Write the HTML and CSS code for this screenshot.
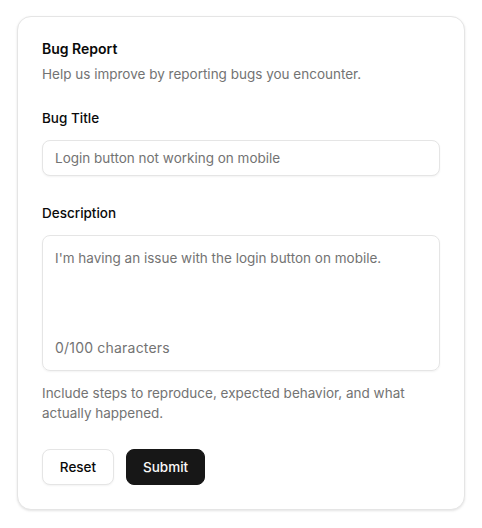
FILE: index.html
```html
<!DOCTYPE html>
<html lang="en">
<head>
<meta charset="utf-8">
<title>Bug Report</title>
<link rel="stylesheet" href="styles.css">
</head>
<body>
<div class="card">
  <div class="card-header">
    <h2 class="card-title">Bug Report</h2>
    <p class="card-desc">Help us improve by reporting bugs you encounter.</p>
  </div>
  <div class="field field-title">
    <label class="label" for="title">Bug Title</label>
    <input class="input" id="title" type="text" placeholder="Login button not working on mobile">
  </div>
  <div class="field field-desc">
    <label class="label" for="desc">Description</label>
    <div class="textarea">
      <div class="textarea-text">I'm having an issue with the login button on mobile.</div>
      <div class="counter">0/100 characters</div>
    </div>
    <p class="hint">Include steps to reproduce, expected behavior, and what actually happened.</p>
  </div>
  <div class="actions">
    <button class="btn btn-outline" type="button">Reset</button>
    <button class="btn btn-primary" type="button">Submit</button>
  </div>
</div>
</body>
</html>
```
FILE: styles.css
```css
* { box-sizing: border-box; }
html, body { margin: 0; padding: 0; background: #ffffff; }
body {
  padding: 16px 17px;
  font-family: Inter, "Noto Sans", "Liberation Sans", sans-serif;
  color: #0a0a0a;
}
.card {
  width: 448px;
  border: 1px solid #e5e5e5;
  border-radius: 14px;
  background: #fff;
  box-shadow: 0 1px 3px rgba(0,0,0,0.08), 0 1px 2px rgba(0,0,0,0.04);
  padding: 24px;
  display: flex;
  flex-direction: column;
}
.card-header { display: flex; flex-direction: column; gap: 7px; }
.card-title {
  margin: 0;
  font-size: 14px;
  line-height: 16px;
  font-weight: 600;
}
.card-desc {
  margin: 0;
  font-size: 13.5px;
  line-height: 20px;
  color: #737373;
}
.field { display: flex; flex-direction: column; }
.field-title { margin-top: 26px; }
.field-desc { margin-top: 29px; }
.label {
  font-size: 13.5px;
  line-height: 16px;
  font-weight: 500;
  margin-bottom: 14px;
}
.input {
  height: 36px;
  width: 100%;
  border: 1px solid #e5e5e5;
  border-radius: 8px;
  padding: 0 12px;
  font: inherit;
  font-size: 13.5px;
  color: #0a0a0a;
  box-shadow: 0 1px 2px rgba(0,0,0,0.05);
  outline: none;
}
.input::placeholder { color: #737373; }
.textarea {
  height: 136px;
  border: 1px solid #e5e5e5;
  border-radius: 8px;
  padding: 12px;
  box-shadow: 0 1px 2px rgba(0,0,0,0.05);
  display: flex;
  flex-direction: column;
  justify-content: space-between;
  font-size: 13.5px;
  line-height: 20px;
  color: #737373;
}
.counter { font-size: 14px; letter-spacing: 0.2px; }
.hint {
  margin: 12px 0 0;
  font-size: 13.5px;
  line-height: 20px;
  color: #737373;
}
.actions {
  margin-top: 26px;
  display: flex;
  gap: 12px;
}
.btn {
  height: 36px;
  border-radius: 8px;
  font: inherit;
  font-size: 13.5px;
  font-weight: 500;
  padding: 0 16px;
  cursor: pointer;
}
.btn-outline {
  width: 72px;
  background: #fff;
  color: #0a0a0a;
  border: 1px solid #e5e5e5;
  box-shadow: 0 1px 2px rgba(0,0,0,0.05);
}
.btn-primary {
  width: 79px;
  background: #171717;
  color: #fafafa;
  border: 1px solid #171717;
}
```
